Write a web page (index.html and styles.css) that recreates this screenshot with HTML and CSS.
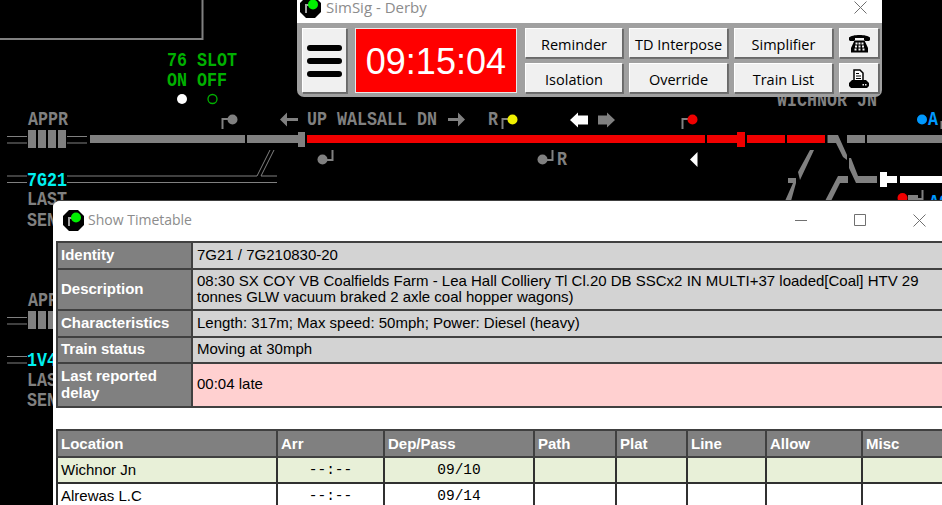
FILE: index.html
```html
<!DOCTYPE html>
<html lang="en">
<head>
  <meta charset="UTF-8" />
  <meta name="viewport" content="width=device-width, initial-scale=1.0" />
  <title>SimSig - Derby</title>
  <link rel="stylesheet" href="styles.css">
</head>
<body>
  <svg class="board" width="942" height="505" viewBox="0 0 942 505">
    <!-- panel frame -->
    <path class="frame" d="M0 39H202.500V0" />

    <!-- labels: the panel font is taller than it is wide -->
    <g class="lbl green">
      <text transform="translate(167 66) scale(1 1.18)">76 SLOT</text>
      <text transform="translate(167 86) scale(1 1.18)">ON OFF</text>
    </g>
    <g class="lbl">
      <text transform="translate(28 125) scale(1 1.18)">APPR</text>
      <text transform="translate(307 125) scale(1 1.18)">UP WALSALL DN</text>
      <text transform="translate(488 125) scale(1 1.18)">R</text>
      <text transform="translate(557 165) scale(1 1.18)">R</text>
      <text transform="translate(777 106) scale(1 1.18)">WICHNOR JN</text>
      <text transform="translate(27 205) scale(1 1.18)">LAST</text>
      <text transform="translate(27 226) scale(1 1.18)">SEN</text>
      <text transform="translate(28 306) scale(1 1.18)">APP</text>
      <text transform="translate(27 386) scale(1 1.18)">LAS</text>
      <text transform="translate(27 406) scale(1 1.18)">SEN</text>
    </g>
    <g class="lbl cyan">
      <text transform="translate(27 186) scale(1 1.18)">7G21</text>
      <text transform="translate(27 366) scale(1 1.18)">1V4</text>
    </g>
    <g class="lbl blue">
      <text transform="translate(928 125) scale(1 1.18)">A</text>
      <text transform="translate(929 208) scale(1 1.18)">A0</text>
    </g>

    <circle cx="182" cy="99" r="5" fill="#fff" />
    <circle cx="212.500" cy="99" r="4.500" fill="none" stroke="#00b000" stroke-width="1.300" />

    <!-- approach blocks -->
    <path class="thin" d="M7 136.500H27M7 143H27M67 136.500H87M67 143H87M7 176H27M7 182.500H27M67 176H257M261 176H277M67 182.500H277M257 176L270 150M261 176L274 150M7 317.500H27M7 324H27M7 356.500H27M7 363H27" />
    <path class="grey" d="M28 130h8v18h-8zM38 130h8v18h-8zM48 130h8v18h-8zM58 130h8v18h-8zM28 311h8v18h-8zM38 311h8v18h-8zM48 311h8v18h-8z" />

    <!-- track -->
    <path class="grey" d="M90 135h155v8H90zM247 135h51v8h-51zM298 132h7v15h-7z" />
    <path class="red" d="M307 135h398v8H307zM707 135h30v8h-30zM737 132h8v15h-8zM747 135h38v8h-38zM787 135h38v8h-38z" />
    <path class="grey" d="M827.500 135H838L847 155V160L843 157L836 143H827.500zM847 135h18v8h-18zM867 135h75v8h-75z" />
    <path class="grey" d="M849 158H851L858 176H877V183H856L849 168zM838 176H848V183H840L831 201H825zM788 178H796V183L791 201H785L793 183H788zM810 150H814L800 180L798 172z" />
    <path class="white" d="M880 172h7v4h10v7h-10v4h-7zM900 176h42v7h-42z" />
    <path class="grey" d="M908 195h10v6h-10z" />
    <path class="stem" d="M922.500 190v9h-5" />
    <circle cx="902.500" cy="198" r="5" fill="#f00000" />

    <!-- signals -->
    <path class="stem" d="M222.500 129V119H228" />
    <circle cx="232.500" cy="119.500" r="5" fill="#808080" />
    <path class="stem" d="M502.500 129V119H508" />
    <circle cx="512.500" cy="119.500" r="5" fill="#f0f000" />
    <path class="stem" d="M682.500 129V119H688" />
    <circle cx="692.500" cy="119.500" r="5" fill="#f00000" />
    <path class="stem" d="M332.500 150V160H327" />
    <circle cx="322.500" cy="159.500" r="5" fill="#808080" />
    <path class="stem" d="M552.500 150V160H547" />
    <circle cx="542.500" cy="159.500" r="5" fill="#808080" />
    <circle cx="922" cy="119.500" r="5" fill="#0099ff" />
    <path class="stem" d="M941.500 129V121" />

    <!-- direction arrows -->
    <path class="grey" d="M280 119.500l7 -7v5.500h11v3h-11v5.500zM465 119.500l-7 -7v5.500h-10v3h10v5.500z" />
    <path class="white" d="M570 120l8 -7.500v3h10v9h-10v3z" />
    <path class="grey" d="M615 120l-8 -7.500v3h-9v9h9v3z" />
    <path class="white" d="M690 159.500l7.500 -7.500v15z" />
  </svg>

  <section class="window panel-win">
    <div class="titlebar">
      <svg class="app-icon" width="21" height="21" viewBox="0 0 21 21">
        <path d="M6 0h9l6 6v9l-6 6H6l-6-6V6z" fill="#000" />
        <path d="M6 16V8h5" fill="none" stroke="#a0a0a0" stroke-width="2" />
        <circle cx="13" cy="7.500" r="5" fill="#00f000" />
      </svg>
      <span class="title">SimSig - Derby</span>
      <svg class="close-x" width="13" height="13" viewBox="0 0 13 13"><path d="M.5.500l12 12M12.500.500l-12 12" /></svg>
    </div>
    <div class="toolbar">
      <button class="btn menu-btn"><i></i><i></i><i></i></button>
      <div class="clock">09:15:04</div>
      <div class="btn-grid">
        <button class="btn">Reminder</button>
        <button class="btn">TD Interpose</button>
        <button class="btn">Simplifier</button>
        <button class="btn icon-btn">
          <svg width="21" height="19" viewBox="0 0 21 19">
            <path d="M0 6V3.500C3 0 18 0 21 3.500V6l-1 1h-4l-1-1V4H6v2L5 7H1z" />
            <path d="M2 18.500V14L5.500 6.500h10L19 14v4.500z" />
            <g fill="#f0f0f0"><rect x="6.500" y="8.500" width="2" height="2" /><rect x="9.500" y="8.500" width="2" height="2" /><rect x="12.500" y="8.500" width="2" height="2" /><rect x="6" y="11.500" width="2" height="2" /><rect x="9.500" y="11.500" width="2" height="2" /><rect x="13" y="11.500" width="2" height="2" /><rect x="5.500" y="14.500" width="2" height="2" /><rect x="9.500" y="14.500" width="2" height="2" /><rect x="13.500" y="14.500" width="2" height="2" /></g>
          </svg>
        </button>
        <button class="btn">Isolation</button>
        <button class="btn">Override</button>
        <button class="btn">Train List</button>
        <button class="btn icon-btn">
          <svg width="20" height="19" viewBox="0 0 20 19">
            <path d="M5 1h6l3 3v8H5z" fill="#fff" stroke="#000" stroke-width="1.500" />
            <path d="M7 4.500h3M7 7h5M7 9.500h5" stroke="#000" fill="none" />
            <path d="M3 11h14l3 3v3l-2 2H2l-2-2v-3z" />
            <rect x="13.500" y="15" width="1.500" height="1.500" fill="#f0f0f0" />
            <rect x="16" y="15" width="1.500" height="1.500" fill="#f0f0f0" />
          </svg>
        </button>
      </div>
    </div>
  </section>

  <section class="window tt-win">
    <div class="titlebar">
      <svg class="app-icon" width="21" height="21" viewBox="0 0 21 21">
        <path d="M6 0h9l6 6v9l-6 6H6l-6-6V6z" fill="#000" />
        <path d="M6 16V8h5" fill="none" stroke="#a0a0a0" stroke-width="2" />
        <circle cx="13" cy="7.500" r="5" fill="#00f000" />
      </svg>
      <span class="title">Show Timetable</span>
      <div class="win-controls">
        <svg width="12" height="12" viewBox="0 0 12 12"><path d="M0 6.500h12" /></svg>
        <svg width="12" height="12" viewBox="0 0 12 12"><path d="M.5.500h11v11H.5z" /></svg>
        <svg width="13" height="13" viewBox="0 0 13 13"><path d="M.5.500l12 12M12.500.500l-12 12" /></svg>
      </div>
    </div>

    <table class="info">
      <tr class="r-id"><th>Identity</th><td>7G21 / 7G210830-20</td></tr>
      <tr class="r-desc"><th>Description</th><td>08:30 SX COY VB Coalfields Farm - Lea Hall Colliery Tl Cl.20 DB SSCx2 IN MULTI+37 loaded[Coal] HTV 29 tonnes GLW vacuum braked 2 axle coal hopper wagons)</td></tr>
      <tr class="r-id"><th>Characteristics</th><td>Length: 317m; Max speed: 50mph; Power: Diesel (heavy)</td></tr>
      <tr class="r-status"><th>Train status</th><td>Moving at 30mph</td></tr>
      <tr class="late"><th>Last reported delay</th><td>00:04 late</td></tr>
    </table>

    <table class="sched">
      <colgroup>
        <col class="c-loc"><col class="c-arr"><col class="c-dep"><col class="c-path"><col class="c-plat"><col class="c-line"><col class="c-allow"><col class="c-misc">
      </colgroup>
      <tr class="r-head"><th>Location</th><th>Arr</th><th>Dep/Pass</th><th>Path</th><th>Plat</th><th>Line</th><th>Allow</th><th>Misc</th></tr>
      <tr class="now"><td>Wichnor Jn</td><td class="time">--:--</td><td class="time">09/10</td><td></td><td></td><td></td><td></td><td></td></tr>
      <tr><td>Alrewas L.C</td><td class="time">--:--</td><td class="time">09/14</td><td></td><td></td><td></td><td></td><td></td></tr>
    </table>
  </section>
</body>
</html>
```

FILE: styles.css
```css
:root {
  --grey: #808080;
  --panel: #a0a0a0;
  --face: #f0f0f0;
  --line: #404040;
  --title: #8c8c8c;
}

* {
  margin: 0;
  padding: 0;
  box-sizing: border-box;
}

html, body {
  width: 942px;
  height: 505px;
  overflow: hidden;
}

body {
  position: relative;
  background: #000;
  font-family: "Liberation Sans", Arial, sans-serif;
}

/* signalling panel */
.board {
  position: absolute;
  left: 0;
  top: 0;
}

.lbl {
  font-family: "Liberation Mono", monospace;
  font-weight: 700;
  font-size: 16.67px;
  fill: var(--grey);
}

.lbl.green { fill: #00b000; }
.lbl.cyan { fill: #00f0f0; }
.lbl.blue { fill: #0099ff; }

.frame { fill: none; stroke: var(--grey); stroke-width: 2; }
.thin { fill: none; stroke: var(--grey); stroke-width: 1; }
.grey { fill: var(--grey); }
.red { fill: #f00000; }
.white { fill: #fff; }
.stem { fill: none; stroke: var(--grey); stroke-width: 2; }

/* floating windows */
.window {
  position: absolute;
  background: #fff;
  overflow: hidden;
}

.titlebar {
  display: flex;
  align-items: center;
  background: #fff;
}

.title {
  color: var(--title);
  line-height: 14px;
}

.close-x path,
.win-controls path {
  fill: none;
  stroke: #707070;
  stroke-width: 1;
}

/* clock and buttons window */
.panel-win {
  left: 297px;
  top: 0;
  width: 585px;
  height: 97px;
  background: var(--panel);
  border-radius: 0 0 7px 7px;
}

.panel-win .titlebar {
  height: 23px;
  padding: 0 15px 0 3px;
}

.panel-win .app-icon {
  margin-top: -9px;
}

.panel-win .title {
  margin-left: 5px;
  margin-top: -9px;
  font-family: "Open Sans", sans-serif;
  font-size: 15px;
}

.panel-win .close-x {
  margin-left: auto;
  margin-top: -8px;
}

.toolbar {
  display: flex;
  padding: 5px 3px 0 5px;
}

.btn {
  background: var(--face);
  border: 1px solid;
  border-color: #fff #696969 #696969 #fff;
  box-shadow: 1px 1px 0 #707070;
  color: #000;
  font-family: "Open Sans", sans-serif;
  font-size: 14.5px;
  padding-top: 2px;
}

.menu-btn {
  width: 45px;
  height: 65px;
  display: flex;
  flex-direction: column;
  align-items: center;
  justify-content: center;
  gap: 7px;
  padding-top: 0;
}

.menu-btn i {
  display: block;
  width: 35px;
  height: 6px;
  border-radius: 3px;
  background: #000;
}

.clock {
  width: 163px;
  height: 65px;
  margin-left: 8px;
  background: #ff0000;
  border: 1px solid #e8e8e8;
  color: #fff;
  font-size: 36px;
  line-height: 65px;
  text-align: center;
}

.btn-grid {
  display: grid;
  grid-template-columns: 98px 99px 99px 40px;
  grid-template-rows: 30px 30px;
  column-gap: 6px;
  row-gap: 5px;
  margin-left: 8px;
}

.icon-btn {
  display: flex;
  align-items: center;
  justify-content: center;
  padding-top: 0;
}

/* timetable window */
.tt-win {
  left: 53px;
  top: 200px;
  width: 889px;
  height: 305px;
  border-top: 1px solid var(--line);
  border-radius: 7px 0 0 0;
}

.tt-win .titlebar {
  height: 40px;
  padding-left: 10px;
  padding-bottom: 2px;
}

.tt-win .title {
  margin-left: 4px;
  font-family: "Open Sans", sans-serif;
  font-size: 14px;
}

.win-controls {
  display: flex;
  align-items: center;
  gap: 47px;
  margin-left: auto;
  margin-right: 16px;
}

table {
  border-collapse: collapse;
  margin-left: 3px;
  table-layout: fixed;
  font-size: 15px;
  line-height: 16px;
  color: #000;
}

th, td {
  border: 2px solid var(--line);
  text-align: left;
  vertical-align: middle;
  padding: 0 3px;
}

th {
  background: var(--grey);
  color: #fff;
  font-weight: 700;
  line-height: 17px;
}

.info {
  width: 900px;
}

.info th {
  width: 135px;
  padding-bottom: 3px;
}

.info td {
  background: #d3d3d3;
  padding-left: 4px;
  padding-bottom: 2px;
}

.r-id { height: 27px; }
.r-desc { height: 41px; }
.r-status { height: 26px; }
.late { height: 44px; }
.info .late td { background: #ffd0d0; }

.sched {
  width: 900px;
  margin-top: 21px;
}

.sched tr { height: 26px; }
.sched .r-head { height: 27px; }

.sched td {
  border-color: #303030;
}

.c-loc { width: 220px; }
.c-arr { width: 107px; }
.c-dep { width: 150px; }
.c-path { width: 82px; }
.c-plat { width: 71px; }
.c-line { width: 79px; }
.c-allow { width: 96px; }
.c-misc { width: 95px; }

.now td { background: #e8f0d8; }

.time {
  font-family: "Liberation Mono", monospace;
  font-size: 14.5px;
  text-align: center;
}
```
